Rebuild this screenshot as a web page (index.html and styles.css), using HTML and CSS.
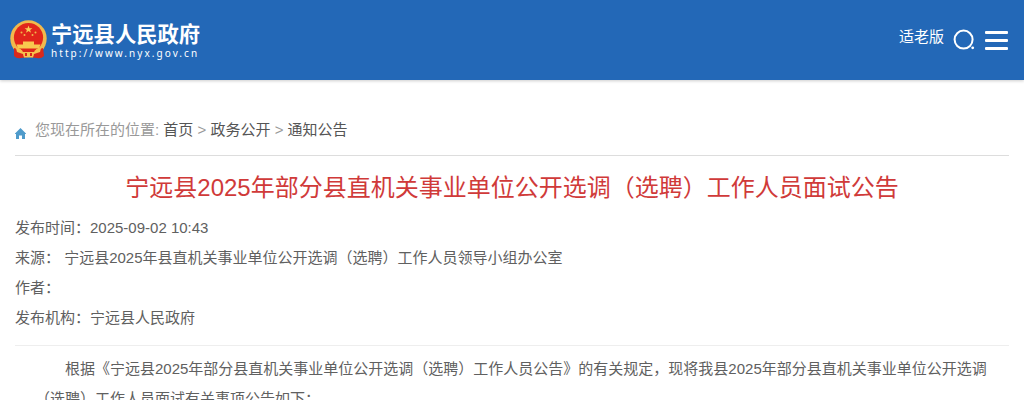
FILE: index.html
```html
<!DOCTYPE html>
<html lang="zh-CN">
<head>
  <meta charset="UTF-8">
  <meta name="viewport" content="width=device-width, initial-scale=1.0">
  <title>宁远县人民政府</title>
  <link rel="stylesheet" href="styles.css">
</head>
<body>
  <header class="header">
    <a class="logo" href="#">
      <svg class="emblem" viewBox="0 0 38 40" width="38" height="40">
        <path d="M5 27 L4 36 Q7 39 11 38 L19 37 L27 38 Q31 39 34 36 L33 27 Z" fill="#d9291c"/>
        <circle cx="18.500" cy="18.500" r="18.200" fill="#f1b94c"/>
        <circle cx="18.500" cy="17.500" r="14.600" fill="#e1251b"/>
        <path d="M18.500 5.500 l1 2.700 h2.900 l-2.300 1.700 .9 2.800 -2.500-1.700 -2.500 1.700 .9-2.800 -2.300-1.700 h2.900z" fill="#f9cf58"/>
        <g fill="#f2b84b">
          <circle cx="11.500" cy="12.500" r="1"/>
          <circle cx="14.500" cy="15" r="1"/>
          <circle cx="22.500" cy="15" r="1"/>
          <circle cx="25.500" cy="12.500" r="1"/>
        </g>
        <path d="M13 21.500 h11 v3 h6.500 l-1.500 4 H8 l-1.500-4 H13z" fill="#f8c94f"/>
        <path d="M4 28 l8 2.500 h13 l8-2.500 v6 l-4 4 -4-1 -3-2.500 h-7 L12 37 l-4 1 -4-4z" fill="#d9291c"/>
        <path d="M6 28 q5 0 7 4 h11 q2-4 7-4 l-1 4 -6 2 -1 3.500 h-9 l-1-3.500 -6-2z" fill="#f6c24e"/>
        <path d="M15 33 h2 v3 h-2z M20 33 h2 v3 h-2z" fill="#d9291c"/>
      </svg>
      <span class="logo-text">
        <strong class="logo-name">宁远县人民政府</strong>
        <span class="logo-url">http://www.nyx.gov.cn</span>
      </span>
    </a>
    <div class="tools">
      <a class="elder" href="#">适老版</a>
      <svg class="search" viewBox="0 0 22 22" width="22" height="22">
        <circle cx="10.600" cy="10.600" r="9" fill="none" stroke="#fff" stroke-width="2"/>
        <circle cx="19.700" cy="18.800" r="1.400" fill="#fff"/>
      </svg>
      <span class="menu"><i></i><i></i><i></i></span>
    </div>
  </header>

  <main class="main">
    <nav class="crumbs">
      <svg class="home" viewBox="0 0 11 11" width="11" height="11">
        <path d="M5.500 0 L11 5.500 V6 H10 V11 H7 V7.500 H4 V11 H1 V6 H0 V5.500z" fill="#4f9bcb"/>
      </svg>
      <span>您现在所在的位置: <a href="#">首页</a> &gt; <a href="#">政务公开</a> &gt; <a href="#">通知公告</a></span>
    </nav>
    <h1 class="title">宁远县2025年部分县直机关事业单位公开选调（选聘）工作人员面试公告</h1>
    <ul class="info">
      <li>发布时间：2025-09-02 10:43</li>
      <li>来源： 宁远县2025年县直机关事业单位公开选调（选聘）工作人员领导小组办公室</li>
      <li>作者：</li>
      <li>发布机构：宁远县人民政府</li>
    </ul>
    <article class="content">
      <p>根据《宁远县2025年部分县直机关事业单位公开选调（选聘）工作人员公告》的有关规定，现将我县2025年部分县直机关事业单位公开选调（选聘）工作人员面试有关事项公告如下：</p>
    </article>
  </main>
</body>
</html>
```

FILE: styles.css
```css
* {
  box-sizing: border-box;
  margin: 0;
  padding: 0;
}
html {
  overflow: hidden;
}
body {
  height: 400px;
  overflow: hidden;
  background: #fff;
  color: #606060;
  font: 15px/30px "Liberation Sans", "Noto Sans CJK SC", sans-serif;
}
a {
  color: inherit;
  text-decoration: none;
}
.header {
  display: flex;
  justify-content: space-between;
  height: 80px;
  padding: 20px 16px 0 10px;
  background: #2368b7;
  box-shadow: 0 1px 3px rgba(0, 0, 0, 0.2);
  color: #fff;
}
.logo {
  display: flex;
  align-items: flex-start;
  gap: 3px;
}
.logo-text {
  display: flex;
  flex-direction: column;
  padding-top: 1px;
}
.logo-name {
  font-size: 21.3px;
  line-height: 28px;
}
.logo-url {
  margin-top: -2px;
  font: 10px/12px "Noto Sans", sans-serif;
  letter-spacing: 2.05px;
}
.tools {
  display: flex;
  align-items: flex-start;
}
.elder {
  margin-top: 2px;
}
.search {
  margin: 9px 0 0 9px;
}
.menu {
  display: flex;
  flex-direction: column;
  gap: 5px;
  width: 23px;
  margin: 11px 0 0 10px;
}
.menu i {
  height: 3px;
  border-radius: 1px;
  background: #fff;
}
.main {
  padding: 35px 15px 0;
}
.crumbs {
  display: flex;
  gap: 9px;
  height: 41px;
  border-bottom: 1px solid #ddd;
  color: #999;
}
.crumbs a {
  color: #555;
}
.home {
  margin-top: 13px;
}
.title {
  margin-top: 14px;
  color: #d03a39;
  font-size: 24px;
  font-weight: normal;
  line-height: 36px;
  text-align: center;
}
.info {
  height: 140px;
  padding-top: 7px;
  border-bottom: 1px solid #eee;
  list-style: none;
}
.content {
  padding: 8px 20px 0;
  text-indent: 30px;
}
```
